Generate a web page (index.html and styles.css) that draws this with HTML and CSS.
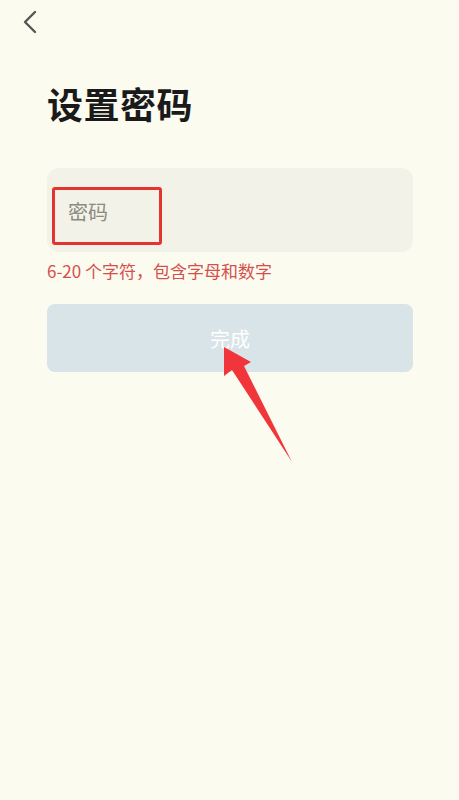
FILE: index.html
```html
<!DOCTYPE html>
<html lang="zh">
<head>
<meta charset="utf-8">
<title>设置密码</title>
<link rel="stylesheet" href="styles.css">
</head>
<body>
<div class="page">
  <header class="topbar">
    <svg class="back" width="16" height="24" viewBox="0 0 16 24" aria-hidden="true">
      <path d="M13 2 L3 12 L13 22" fill="none" stroke="#555" stroke-width="2.4" stroke-linecap="round" stroke-linejoin="round"/>
    </svg>
  </header>
  <main class="content">
    <h1 class="title">设置密码</h1>
    <div class="field">
      <span class="placeholder">密码</span>
      <span class="highlight"></span>
    </div>
    <p class="hint">6-20 个字符，包含字母和数字</p>
    <button class="done">完成</button>
  </main>
  <svg class="arrow" width="459" height="800" viewBox="0 0 459 800" aria-hidden="true">
    <polygon points="224,347 251,362 244,366 292,462 232,370 224,376" fill="#f0363a"/>
  </svg>
</div>
</body>
</html>
```
FILE: styles.css
```css
html, body {
  margin: 0;
  padding: 0;
  background: #fbfbf0;
}
body {
  font-family: "Noto Sans CJK SC", "Noto Sans", sans-serif;
}
.page {
  position: relative;
  width: 459px;
  height: 800px;
  overflow: hidden;
}
.topbar {
  height: 46px;
  display: flex;
  align-items: center;
  padding-left: 22px;
}
.back {
  display: block;
  margin-top: -2px;
}
.content {
  padding: 0 46px 0 47px;
  display: flex;
  flex-direction: column;
}
.title {
  margin: 36px 0 0;
  font-size: 36px;
  line-height: 42px;
  font-weight: 700;
  color: #1a1a1a;
  letter-spacing: 0.5px;
}
.field {
  position: relative;
  margin-top: 44px;
  height: 84px;
  border-radius: 12px;
  background: #f3f2e8;
  display: flex;
  align-items: center;
  padding-left: 21px;
  box-sizing: border-box;
}
.placeholder {
  font-size: 20px;
  color: #8b8b82;
  margin-top: 2px;
}
.highlight {
  position: absolute;
  left: 5px;
  top: 19px;
  width: 110px;
  height: 58px;
  box-sizing: border-box;
  border: 3px solid #e5332f;
  border-radius: 3px;
}
.hint {
  margin: 8px 0 0;
  font-size: 17px;
  line-height: 22px;
  color: #d4504b;
}
.done {
  margin-top: 22px;
  height: 68px;
  border: none;
  border-radius: 8px;
  background: #d8e4e7;
  color: #ffffff;
  font-family: "Noto Sans CJK SC", "Noto Sans", sans-serif;
  font-size: 20px;
  padding: 0;
}
.arrow {
  position: absolute;
  left: 0;
  top: 0;
  pointer-events: none;
}
```
